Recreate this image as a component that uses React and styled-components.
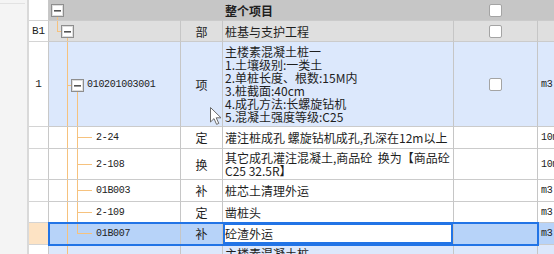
import React from 'react';
import styled, { createGlobalStyle } from 'styled-components';

const GlobalStyle = createGlobalStyle`
  html, body {
    margin: 0;
    padding: 0;
    background: #fff;
    overflow: hidden;
  }
  body {
    font-family: "Noto Sans CJK SC", "Noto Sans", sans-serif;
  }
`;

const RAIL = '#f6c27e';
const BLUE = '#2274e6';

const BG = {
  head: '#c6c6c6',
  part: '#dfdfdf',
  item: '#dce8fc',
  plain: '#ffffff',
  sel: '#b7d3f9',
};

const Screen = styled.div`
  position: relative;
  display: flex;
  width: 554px;
  height: 254px;
  overflow: hidden;
  background: #fff;
`;

const SidePanel = styled.div`
  flex: none;
  width: 27px;
  background: #f4f4f4;
  border-right: 2px solid #d9d9d9;
`;

const SideRule = styled.div`
  height: 1px;
  margin: 3px 2px 0 0;
  background: #e2e2e2;
`;

const Grid = styled.div`
  flex: 1;
  min-width: 0;
  display: flex;
  flex-direction: column;
`;

const Row = styled.div`
  flex: none;
  display: flex;
  height: ${p => p.$h}px;
`;

const RowNum = styled.div`
  flex: none;
  width: 20px;
  box-sizing: border-box;
  display: flex;
  align-items: center;
  justify-content: center;
  border-right: 1px solid #c8c8c8;
  border-bottom: 1px solid #d4d4d4;
  background: ${p => (p.$active ? '#fde3c4' : '#fff')};
  color: #222;
  font: 11px "Liberation Mono", monospace;
`;

const Band = styled.div`
  flex: none;
  display: flex;
  position: relative;
  z-index: ${p => (p.$selected ? 2 : 0)};
  outline: ${p => (p.$selected ? `2px solid ${BLUE}` : 'none')};
  outline-offset: -1px;
`;

const Cell = styled.div`
  flex: none;
  box-sizing: border-box;
  display: flex;
  align-items: center;
  overflow: hidden;
  white-space: nowrap;
  border-right: 1px solid #c6c6c6;
  border-bottom: 1px solid #cbcbcb;
  background: ${p => p.$bg};
  color: #1e1e1e;
  font-size: 12px;
`;

const TreeCell = styled(Cell)`
  width: 132px;
`;

const TypeCell = styled(Cell)`
  width: 42px;
  justify-content: center;
`;

const NameCell = styled(Cell)`
  width: 231px;
  padding-left: 2px;
  ${p =>
    p.$editing &&
    `
    background: #fff;
    box-shadow: inset 0 0 0 2px ${BLUE};
  `}
`;

const CheckCell = styled(Cell)`
  width: 84px;
  justify-content: center;
`;

const UnitCell = styled(Cell)`
  flex: 1;
  padding-left: 3px;
  border-right: none;
  color: #222;
  font: 10px "Liberation Mono", monospace;
  letter-spacing: -0.3px;
`;

const NameText = styled.div`
  line-height: 13px;
  white-space: pre;
  font-weight: ${p => (p.$bold ? 700 : 400)};
  align-self: ${p => (p.$top ? 'flex-start' : 'center')};
  margin-top: ${p => (p.$top ? '2px' : '0')};
`;

const Code = styled.span`
  color: #222;
  font: 10px "Liberation Mono", monospace;
  letter-spacing: -0.3px;
`;

const Box = styled.span`
  width: 13px;
  height: 13px;
  box-sizing: border-box;
  background: #fff;
  border: 1px solid #a4a4a4;
  border-radius: 2px;
`;

const GuideSvg = styled.svg`
  flex: none;
  display: block;
`;

const Pointer = styled.svg`
  position: absolute;
  left: 209px;
  top: 106px;
`;

function Toggle({ c, cy }) {
  return (
    <g>
      <rect x={c - 5.5} y={cy - 5.5} width={12} height={12} fill="#fff" stroke="#8e8e8e" />
      <rect x={c - 4.5} y={cy - 4.5} width={10} height={10} fill="#fff" stroke="#dedede" />
      <rect x={c - 3} y={cy} width={7} height={1.6} fill="#555" />
    </g>
  );
}

function Guide({ w, h, rails = [], elbow, box }) {
  return (
    <GuideSvg width={w} height={h} viewBox={`0 0 ${w} ${h}`}>
      {rails.map(([x, y1, y2]) => (
        <line key={x} x1={x + 0.5} x2={x + 0.5} y1={y1} y2={y2} stroke={RAIL} />
      ))}
      {elbow && (
        <line x1={elbow[0]} x2={elbow[1]} y1={elbow[2] + 0.5} y2={elbow[2] + 0.5} stroke={RAIL} />
      )}
      {box && <Toggle c={box[0]} cy={box[1]} />}
    </GuideSvg>
  );
}

const childGuide = (h, last) => ({
  w: 47,
  h,
  rails: [
    [18, 0, h],
    [28, 0, last ? Math.floor(h / 2) + 1 : h],
  ],
  elbow: [28, 43, Math.floor(h / 2)],
});

const rows = [
  {
    h: 21,
    num: '',
    bg: BG.head,
    guide: { w: 16, h: 20, rails: [[8, 16, 20]], box: [8, 10] },
    name: '整个项目',
    bold: true,
    check: true,
  },
  {
    h: 21,
    num: 'B1',
    bg: BG.part,
    guide: { w: 26, h: 20, rails: [[8, 0, 10], [18, 16, 20]], elbow: [8, 12, 10], box: [18, 10] },
    type: '部',
    name: '桩基与支护工程',
    check: true,
  },
  {
    h: 85,
    num: '1',
    bg: BG.item,
    guide: { w: 38, h: 84, rails: [[18, 0, 84], [28, 49, 84]], elbow: [18, 22, 43], box: [28, 43] },
    code: '010201003001',
    type: '项',
    name: '主楼素混凝土桩一\n1.土壤级别:一类土\n2.单桩长度、根数:15M内\n3.桩截面:40cm\n4.成孔方法:长螺旋钻机\n5.混凝土强度等级:C25',
    check: true,
    unit: 'm3',
  },
  {
    h: 22,
    bg: BG.plain,
    guide: childGuide(21),
    code: '2-24',
    type: '定',
    name: '灌注桩成孔 螺旋钻机成孔,孔深在12m以上',
    unit: '10m',
  },
  {
    h: 31,
    bg: BG.plain,
    guide: childGuide(30),
    code: '2-108',
    type: '换',
    name: '其它成孔灌注混凝土,商品砼  换为【商品砼\nC25 32.5R】',
    unit: '10m',
  },
  {
    h: 22,
    bg: BG.plain,
    guide: childGuide(21),
    code: '01B003',
    type: '补',
    name: '桩芯土清理外运',
    unit: 'm3',
  },
  {
    h: 21,
    bg: BG.plain,
    guide: childGuide(20),
    code: '2-109',
    type: '定',
    name: '凿桩头',
    unit: 'm3',
  },
  {
    h: 22,
    bg: BG.sel,
    selected: true,
    guide: childGuide(21, true),
    code: '01B007',
    type: '补',
    name: '砼渣外运',
    unit: 'm3',
  },
  {
    h: 20,
    bg: BG.item,
    guide: { w: 47, h: 20, rails: [[18, 0, 20]] },
    name: '主楼素混凝土桩',
    top: true,
  },
];

export default function App() {
  return (
    <Screen>
      <GlobalStyle />
      <SidePanel>
        <SideRule />
      </SidePanel>
      <Grid>
        {rows.map((r, i) => (
          <Row key={i} $h={r.h}>
            <RowNum $active={r.selected}>{r.num}</RowNum>
            <Band $selected={r.selected}>
              <TreeCell $bg={r.bg}>
                <Guide {...r.guide} />
                {r.code && <Code>{r.code}</Code>}
              </TreeCell>
              <TypeCell $bg={r.bg}>{r.type}</TypeCell>
              <NameCell $bg={r.bg} $editing={r.selected}>
                <NameText $bold={r.bold} $top={r.top}>
                  {r.name}
                </NameText>
              </NameCell>
              <CheckCell $bg={r.bg}>{r.check && <Box />}</CheckCell>
            </Band>
            <UnitCell $bg={r.bg}>{r.unit}</UnitCell>
          </Row>
        ))}
      </Grid>
      <Pointer width="14" height="20" viewBox="0 0 14 20">
        <path
          d="M1.5 1.5 L1.5 16 L5 12.6 L7.6 18.4 L9.8 17.4 L7.2 11.8 L12 11.8 Z"
          fill="#fff"
          stroke="#6a6a6a"
          strokeLinejoin="round"
        />
      </Pointer>
    </Screen>
  );
}
